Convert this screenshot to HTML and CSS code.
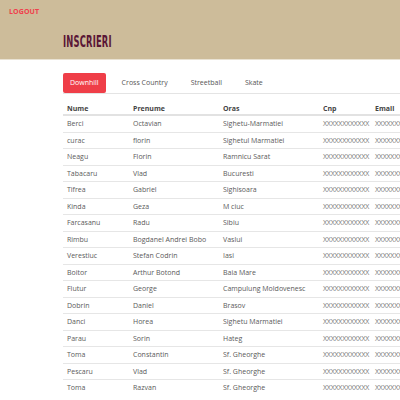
FILE: index.html
```html
<!DOCTYPE html>
<html>
<head>
<meta charset="utf-8">
<link rel="stylesheet" href="styles.css">
</head>
<body>
<header class="top">
  <a class="logout">LOGOUT</a>
  <h1 class="title">INSCRIERI</h1>
</header>
<main class="content">
  <nav class="tabs">
    <span class="tab active">Downhill</span>
    <span class="tab">Cross Country</span>
    <span class="tab">Streetball</span>
    <span class="tab">Skate</span>
  </nav>
  <table class="grid">
    <colgroup><col class="c1"><col class="c2"><col class="c3"><col class="c4"><col class="c5"></colgroup>
    <thead><tr><th>Nume</th><th>Prenume</th><th>Oras</th><th>Cnp</th><th>Email</th></tr></thead>
    <tbody>
      <tr><td>Berci</td><td>Octavian</td><td>Sighetu-Marmatiei</td><td class="x">XXXXXXXXXXXX</td><td class="x">XXXXXXXXXXXX</td></tr>
      <tr><td>curac</td><td>florin</td><td>Sighetul Marmatiei</td><td class="x">XXXXXXXXXXXX</td><td class="x">XXXXXXXXXXXX</td></tr>
      <tr><td>Neagu</td><td>Florin</td><td>Ramnicu Sarat</td><td class="x">XXXXXXXXXXXX</td><td class="x">XXXXXXXXXXXX</td></tr>
      <tr><td>Tabacaru</td><td>Vlad</td><td>Bucuresti</td><td class="x">XXXXXXXXXXXX</td><td class="x">XXXXXXXXXXXX</td></tr>
      <tr><td>Tifrea</td><td>Gabriel</td><td>Sighisoara</td><td class="x">XXXXXXXXXXXX</td><td class="x">XXXXXXXXXXXX</td></tr>
      <tr><td>Kinda</td><td>Geza</td><td>M ciuc</td><td class="x">XXXXXXXXXXXX</td><td class="x">XXXXXXXXXXXX</td></tr>
      <tr><td>Farcasanu</td><td>Radu</td><td>Sibiu</td><td class="x">XXXXXXXXXXXX</td><td class="x">XXXXXXXXXXXX</td></tr>
      <tr><td>Rimbu</td><td>Bogdanel Andrei Bobo</td><td>Vaslui</td><td class="x">XXXXXXXXXXXX</td><td class="x">XXXXXXXXXXXX</td></tr>
      <tr><td>Verestiuc</td><td>Stefan Codrin</td><td>Iasi</td><td class="x">XXXXXXXXXXXX</td><td class="x">XXXXXXXXXXXX</td></tr>
      <tr><td>Boitor</td><td>Arthur Botond</td><td>Baia Mare</td><td class="x">XXXXXXXXXXXX</td><td class="x">XXXXXXXXXXXX</td></tr>
      <tr><td>Flutur</td><td>George</td><td>Campulung Moldovenesc</td><td class="x">XXXXXXXXXXXX</td><td class="x">XXXXXXXXXXXX</td></tr>
      <tr><td>Dobrin</td><td>Daniel</td><td>Brasov</td><td class="x">XXXXXXXXXXXX</td><td class="x">XXXXXXXXXXXX</td></tr>
      <tr><td>Danci</td><td>Horea</td><td>Sighetu Marmatiei</td><td class="x">XXXXXXXXXXXX</td><td class="x">XXXXXXXXXXXX</td></tr>
      <tr><td>Parau</td><td>Sorin</td><td>Hateg</td><td class="x">XXXXXXXXXXXX</td><td class="x">XXXXXXXXXXXX</td></tr>
      <tr><td>Toma</td><td>Constantin</td><td>Sf. Gheorghe</td><td class="x">XXXXXXXXXXXX</td><td class="x">XXXXXXXXXXXX</td></tr>
      <tr><td>Pescaru</td><td>Vlad</td><td>Sf. Gheorghe</td><td class="x">XXXXXXXXXXXX</td><td class="x">XXXXXXXXXXXX</td></tr>
      <tr><td>Toma</td><td>Razvan</td><td>Sf. Gheorghe</td><td class="x">XXXXXXXXXXXX</td><td class="x">XXXXXXXXXXXX</td></tr>
    </tbody>
  </table>
</main>
</body>
</html>
```
FILE: styles.css
```css
html, body {
  margin: 0;
  padding: 0;
  background: #ffffff;
  overflow: hidden;
  width: 400px;
  height: 400px;
}
body {
  font-family: "Open Sans", "Liberation Sans", sans-serif;
  color: #555555;
}
.top {
  background: #cdbc9a;
  height: 60px;
  box-sizing: border-box;
  padding: 7px 0 0 9px;
  border-bottom: 1px solid #e9e2d3;
}
.logout {
  display: block;
  font-size: 7px;
  font-weight: 700;
  color: #f0404c;
  line-height: 10px;
  letter-spacing: 0.1px;
}
.title {
  margin: 17px 0 0 54px;
  font-family: "Liberation Sans Narrow", "DejaVu Sans Condensed", sans-serif;
  font-size: 15px;
  font-weight: 700;
  line-height: 17px;
  color: #5a1636;
  transform: scaleX(0.62);
  transform-origin: left center;
  letter-spacing: 0.3px;
}
.content {
  padding: 13px 0 0 63px;
}
.tabs {
  display: flex;
  gap: 9px;
  border-bottom: 1px solid #e4e4e4;
  width: 400px;
}
.tab {
  font-size: 7px;
  line-height: 20px;
  padding: 0 7px;
  color: #555555;
}
.tab.active {
  background: #ef3e48;
  color: #ffffff;
  border-radius: 2px;
}
.grid {
  border-collapse: collapse;
  table-layout: fixed;
  width: 420px;
  font-size: 7px;
}
.c1 { width: 66px; }
.c2 { width: 90px; }
.c3 { width: 100px; }
.c4 { width: 52px; }
.c5 { width: 112px; }
.grid th {
  text-align: left;
  font-weight: 700;
  color: #444444;
  height: 20px;
  padding: 0 4px 0;
  vertical-align: bottom;
  line-height: 10px;
  border-bottom: 2px solid #e2e2e2;
  white-space: nowrap;
}
.grid td {
  height: 15.5px;
  padding: 0 4px;
  border-top: 1px solid #e6e6e6;
  white-space: nowrap;
  overflow: hidden;
  color: #5a5a5a;
}
.grid td.x {
  color: #777777;
  letter-spacing: -0.2px;
}
```
